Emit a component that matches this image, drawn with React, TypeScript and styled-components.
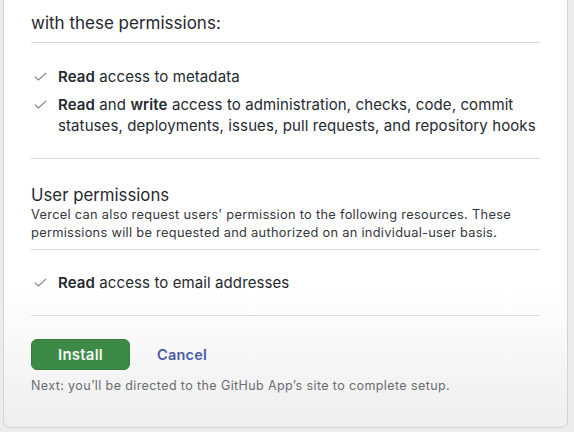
import React from "react";
import styled, { createGlobalStyle } from "styled-components";

const GlobalStyle = createGlobalStyle`
  html, body {
    margin: 0;
    padding: 0;
    background: #ececec;
    font-family: Inter, "Liberation Sans", Arial, sans-serif;
    -webkit-font-smoothing: antialiased;
  }
`;

const Page = styled.div`
  padding: 0 6px 7px 3px;
`;

const Card = styled.div`
  border: 1px solid #d4d4d4;
  border-top: none;
  border-radius: 0 0 7px 7px;
  background: linear-gradient(to bottom, #ffffff 0%, #ffffff 68%, #eeeeee 100%);
  padding: 11px 27px 33px 27px;
`;

const Heading = styled.div`
  font-size: 17px;
  line-height: 24px;
  color: #24292f;
  padding-bottom: 7px;
  border-bottom: 1px solid #d8dadd;
`;

const List = styled.ul<{ $top?: number }>`
  list-style: none;
  margin: 0;
  padding: ${(p) => p.$top ?? 23}px 0 22px;
  display: flex;
  flex-direction: column;
  gap: 7px;
  border-bottom: 1px solid #d8dadd;
`;

const Item = styled.li`
  display: flex;
  align-items: flex-start;
  gap: 11px;
  font-size: 15px;
  letter-spacing: 0.1px;
  line-height: 21px;
  color: #24292f;
  padding-left: 3px;

  b {
    font-weight: 600;
  }
`;

const CheckBox = styled.span`
  flex-shrink: 0;
  width: 13px;
  height: 21px;
  display: flex;
  align-items: center;
`;

const Section = styled.div`
  padding-top: 25px;
`;

const SubHeading = styled.div`
  font-size: 16.8px;
  line-height: 22px;
  color: #24292f;
`;

const Description = styled.p`
  margin: 0;
  font-size: 12.8px;
  letter-spacing: 0.3px;
  line-height: 18px;
  color: #33373c;
  padding-bottom: 7px;
  border-bottom: 1px solid #d8dadd;
`;

const Actions = styled.div`
  display: flex;
  align-items: center;
  gap: 27px;
  margin-top: 23px;
`;

const InstallButton = styled.button`
  width: 99px;
  height: 31px;
  border-radius: 6px;
  border: 1px solid #357c3e;
  background: #3d8a47;
  color: #f2f7f2;
  font-family: inherit;
  font-size: 15px;
  font-weight: 600;
  letter-spacing: 0.2px;
`;

const CancelLink = styled.a`
  color: #4a5ca8;
  font-size: 14.5px;
  font-weight: 600;
  letter-spacing: 0.2px;
  text-decoration: none;
`;

const Note = styled.p`
  margin: 8px 0 0;
  font-size: 12.5px;
  letter-spacing: 0.4px;
  line-height: 16px;
  color: #6a6d72;
`;

const Check = () => (
  <CheckBox>
    <svg width="13" height="9" viewBox="0 0 13 9" fill="none">
      <path d="M0.8 4.6 L4.4 7.9 L12.2 0.8" stroke="#7a7f85" strokeWidth="1.1" />
    </svg>
  </CheckBox>
);

const App = () => {
  return (
    <>
      <GlobalStyle />
      <Page>
        <Card>
          <Heading>with these permissions:</Heading>
          <List>
            <Item>
              <Check />
              <span>
                <b>Read</b> access to metadata
              </span>
            </Item>
            <Item>
              <Check />
              <span>
                <b>Read</b> and <b>write</b> access to administration, checks, code, commit
                statuses, deployments, issues, pull requests, and repository hooks
              </span>
            </Item>
          </List>
          <Section>
            <SubHeading>User permissions</SubHeading>
            <Description>
              Vercel can also request users' permission to the following resources. These
              permissions will be requested and authorized on an individual-user basis.
            </Description>
          </Section>
          <List $top={22}>
            <Item>
              <Check />
              <span>
                <b>Read</b> access to email addresses
              </span>
            </Item>
          </List>
          <Actions>
            <InstallButton>Install</InstallButton>
            <CancelLink href="#">Cancel</CancelLink>
          </Actions>
          <Note>Next: you’ll be directed to the GitHub App’s site to complete setup.</Note>
        </Card>
      </Page>
    </>
  );
};

export default App;
